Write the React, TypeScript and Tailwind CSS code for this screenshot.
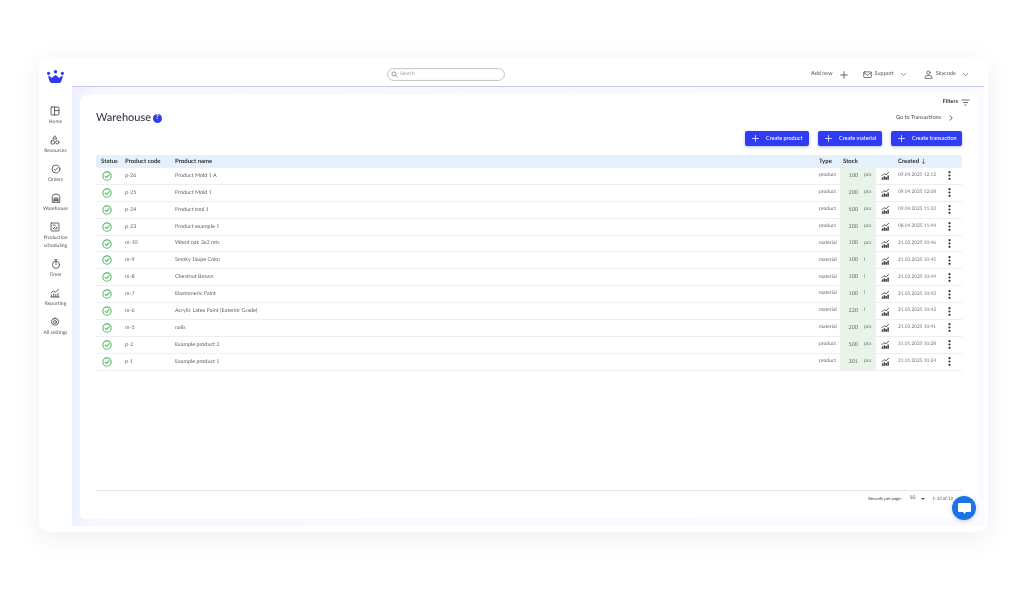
import React from "react";

const BLUE = "#2f3cf0";
const rows = [
  ["p-26", "Product Mold 1 A", "product", "100", "pcs", "09.04.2025 12:12"],
  ["p-25", "Product Mold 1", "product", "200", "pcs", "09.04.2025 12:08"],
  ["p-24", "Product tool 1", "product", "500", "pcs", "09.04.2025 11:33"],
  ["p-23", "Product example 1", "product", "200", "pcs", "08.04.2025 11:44"],
  ["m-10", "Wood oak 3x2 mts", "material", "100", "pcs", "21.03.2025 10:46"],
  ["m-9", "Smoky Taupe Color", "material", "100", "l", "21.03.2025 10:45"],
  ["m-8", "Chestnut Brown", "material", "100", "l", "21.03.2025 10:44"],
  ["m-7", "Elastomeric Paint", "material", "100", "l", "21.03.2025 10:43"],
  ["m-6", "Acrylic Latex Paint (Exterior Grade)", "material", "220", "l", "21.03.2025 10:42"],
  ["m-5", "nails", "material", "200", "pcs", "21.03.2025 10:41"],
  ["p-2", "Example product 2", "product", "500", "pcs", "31.01.2025 10:28"],
  ["p-1", "Example product 1", "product", "301", "pcs", "31.01.2025 10:24"],
];

const I = ({ s = 10, children, w = 0.85 }: { s?: number; children: React.ReactNode; w?: number }) => (
  <svg width={s} height={s} viewBox="0 0 24 24" fill="none" stroke="currentColor" strokeWidth={(w * 24) / s} strokeLinecap="round" strokeLinejoin="round">
    {children}
  </svg>
);

const Chevron = ({ s = 7 }: { s?: number }) => (
  <svg width={s} height={s} viewBox="0 0 24 24" fill="none" stroke="#666" strokeWidth="2.4" strokeLinecap="round" strokeLinejoin="round"><path d="M4 8l8 8 8-8" /></svg>
);
const Plus = ({ s = 9, c = "#fff" }: { s?: number; c?: string }) => (
  <svg width={s} height={s} viewBox="0 0 24 24" fill="none" stroke={c} strokeWidth="2.6" strokeLinecap="round"><path d="M12 2v20M2 12h20" /></svg>
);

const navItems: [string[], React.ReactNode][] = [
  [["Home"], <I><rect x="2.500" y="2.500" width="19" height="19" rx="2" /><path d="M11 2.500v19M11 11h10.500" /></I>],
  [["Resources"], <I><path d="M12 2.500l4.500 7h-9z" /><rect x="2.500" y="14" width="8" height="7.500" rx="1" /><circle cx="17.500" cy="17.500" r="4" /></I>],
  [["Orders"], <I><circle cx="12" cy="12" r="9.500" /><path d="M7.500 12.500l3 3 6-7" /></I>],
  [["Warehouse"], <I><path d="M3 21.500V9a9 6.500 0 0 1 18 0v12.500z" /><path d="M7.500 21.500V12h9v9.500M7.500 15h9M7.500 18h9" /></I>],
  [["Production", "scheduling"], <I><rect x="2.500" y="2.500" width="19" height="19" rx="1" /><path d="M7.500 16.500l4.500-4.500M12 16.500h4.500V12M7.500 7.500h5" /></I>],
  [["Timer"], <I><circle cx="12" cy="14" r="8.500" /><path d="M12 14V9M9 2h6M12 2v3.500" /></I>],
  [["Reporting"], <I><path d="M2.500 12l5-5 5 3 8-7" /><path d="M4 21.500v-5M9 21.500v-8M14 21.500v-6M19 21.500v-9M2 21.500h20" /></I>],
  [["All settings"], <I><circle cx="12" cy="12" r="3.500" /><path d="M12 2l2 2.600 3.200-.7.800 3.200 3 1.300-1.400 3 1.400 3-3 1.300-.8 3.200-3.200-.7-2 2.600-2-2.600-3.200.7-.8-3.200-3-1.300 1.400-3-1.400-3 3-1.300.8-3.200 3.200.7z" /></I>],
];

function CreateBtn({ label, w }: { label: string; w: string }) {
  return (
    <button className={`${w} h-[15px] bg-[#2f3cf0] rounded-[2px] flex items-center pl-[7px] text-white text-[5.5px] font-medium shadow-[0_1px_3px_rgba(47,60,240,0.35)]`}>
      <Plus s={7} />
      <span className="ml-[7px] whitespace-nowrap">{label}</span>
    </button>
  );
}

const grid = "grid grid-cols-[29px_50px_644px_21px_36px_22px_45px_19px] items-center";

export default function App() {
  return (
    <div className="w-[1024px] h-[589px] overflow-hidden pt-[57px] pl-[39px] font-['Lato','Liberation_Sans',sans-serif] text-[#444] [text-rendering:geometricPrecision] will-change-transform">
      <div className="w-[949px] h-[475px] bg-white rounded-[10px] shadow-[0_6px_28px_rgba(30,30,60,0.07)] flex">
        {/* Sidebar */}
        <aside className="w-[33px] shrink-0 flex flex-col items-center pt-[13px]">
          <svg width="17" height="13" viewBox="0 0 17 13" className="mb-[23px]">
            <g fill={BLUE}>
              <circle cx="1.600" cy="3.300" r="1.600" />
              <circle cx="8.500" cy="1.700" r="1.700" />
              <circle cx="15.400" cy="3.300" r="1.600" />
              <path d="M1.200 5.600c1.400.4 2.500 1.200 3.500 2.300.9-1 2.300-2.100 3.800-3 1.500.9 2.900 2 3.800 3 1-1.100 2.100-1.900 3.500-2.300-.2 2.700-1 5-2.200 7-.3.3-.6.400-1 .4H4.400c-.4 0-.7-.1-1-.4-1.200-2-2-4.300-2.200-7z" />
            </g>
          </svg>
          <nav className="flex flex-col items-center gap-[8.500px] text-[#4a4a55]">
            {navItems.map(([lines, icon]) => (
              <div key={lines[0]} className="flex flex-col items-center">
                {icon}
                <div className="mt-[3px] text-[5px] leading-[7.500px] text-center whitespace-nowrap text-[#555]">
                  {lines.map((l) => <div key={l}>{l}</div>)}
                </div>
              </div>
            ))}
          </nav>
        </aside>

        {/* Main */}
        <div className="flex-1 min-w-0 flex flex-col pb-[6px] pr-[4px]">
          <header className="h-[30px] shrink-0 border-b border-b-[#c3c6fb] flex items-center pt-[6px]">
            <div className="ml-[315px] w-[118px] h-[13px] rounded-full border border-[#c9c9c9] shadow-[inset_0_0_2px_rgba(0,0,0,0.08)] flex items-center pl-[3px] gap-[2px]">
              <svg width="7" height="7" viewBox="0 0 24 24" fill="none" stroke="#888" strokeWidth="3"><circle cx="10" cy="10" r="7" /><path d="M15 15l7 7" /></svg>
              <span className="text-[5px] text-[#999]">Search</span>
            </div>
            <div className="ml-auto flex items-center text-[5.5px] text-[#555] pr-[15px]">
              <span>Add new</span>
              <span className="ml-[7px]"><Plus s={8} c="#555" /></span>
              <span className="ml-[15px] text-[#555] flex"><I s={9} w={0.8}><rect x="2" y="5" width="20" height="15" rx="1.500" /><path d="M2 7l10 7 10-7" /></I></span>
              <span className="ml-[3px]">Support</span>
              <span className="ml-[6px] flex"><Chevron /></span>
              <span className="ml-[17px] flex text-[#555]"><I s={9} w={0.8}><circle cx="12" cy="7" r="4.500" /><path d="M3 22v-3a4 4 0 0 1 4-4h10a4 4 0 0 1 4 4v3z" /></I></span>
              <span className="ml-[3px]">Skycode</span>
              <span className="ml-[6px] flex"><Chevron /></span>
            </div>
          </header>

          <div className="flex-1 min-h-0 bg-gradient-to-r from-[#eef0ff] via-[#f6faff] via-[3%] to-[#f8fbff] pl-[8px] pt-[8px] pr-[6px] pb-[7px]">
            <main className="h-full bg-white rounded-[6px] relative pl-[16px] pr-[16px] flex flex-col">
              <div className="flex justify-end items-center pt-[2px] h-[12px] mr-[-8px]">
                <span className="text-[5.500px] font-bold text-[#333]">Filters</span>
                <svg width="9" height="7" viewBox="0 0 18 14" fill="none" stroke="#444" strokeWidth="1.500" className="ml-[3px]"><path d="M1 2h16M4 7h10M7 12h4" /></svg>
              </div>
              <div className="flex justify-between items-start h-[23px] mt-[3px]">
                <div className="flex items-center">
                  <span className="text-[11px] leading-[16px] font-medium text-[#3b3b4d]">Warehouse</span>
                  <span className="ml-[1.500px] w-[9px] h-[9px] rounded-full bg-[#2f3cf0] text-white text-[6.500px] font-bold flex items-center justify-center">?</span>
                </div>
                <div className="flex items-center text-[5.5px] text-[#444] pr-[8px] mt-[4px]">
                  <span>Go to Transactions</span>
                  <svg width="6" height="6" viewBox="0 0 24 24" fill="none" stroke="#444" strokeWidth="3.500" className="ml-[7px]"><path d="M7 2l10 10-10 10" /></svg>
                </div>
              </div>
              <div className="flex justify-end gap-[9px] mb-[9px] mt-[-2px]">
                <CreateBtn label="Create product" w="w-[64px]" />
                <CreateBtn label="Create material" w="w-[64px]" />
                <CreateBtn label="Create transaction" w="w-[71px]" />
              </div>

              <div className={`${grid} h-[13px] bg-[#e4f0fc] text-[6px] font-bold text-[#333] rounded-[2px]`}>
                <span className="pl-[5px]">Status</span>
                <span>Product code</span>
                <span>Product name</span>
                <span>Type</span>
                <span className="pl-[3px]">Stock</span>
                <span />
                <span className="flex items-center">Created <span className="ml-[2px] font-normal">↓</span></span>
                <span />
              </div>
              <div>
                {rows.map((r) => (
                  <div key={r[0]} className={`${grid} h-[16.900px] border-b border-b-[#eeeeee] text-[5.4px] text-[#666]`}>
                    <span className="pl-[6px] flex">
                      <svg width="10" height="10" viewBox="0 0 24 24" fill="none" stroke="#58b868" strokeWidth="2.600" strokeLinecap="round" strokeLinejoin="round"><circle cx="12" cy="12" r="10" /><path d="M7.500 12.500l3.200 3.200 6.500-7" /></svg>
                    </span>
                    <span>{r[0]}</span>
                    <span>{r[1]}</span>
                    <span className="text-[5px]">{r[2]}</span>
                    <span className="h-full bg-[#e8f4e8] flex items-center">
                      <span className="w-[18px] text-right">{r[3]}</span>
                      <span className="ml-[6px] text-[5px]">{r[4]}</span>
                    </span>
                    <span className="pl-[5px] flex text-[#444]">
                      <svg width="9" height="9" viewBox="0 0 24 24" fill="none" stroke="currentColor" strokeWidth="2.400"><path d="M2 13l6-6 5 3 8-7" /><path d="M4 23v-6M9 23v-9M14 23v-7M19 23v-11" strokeWidth="4" /></svg>
                    </span>
                    <span className="text-[4.800px] text-[#777] whitespace-nowrap">{r[5]}</span>
                    <span className="flex pl-[5px]">
                      <svg width="3" height="9" viewBox="0 0 3 9" fill="#333"><circle cx="1.500" cy="1.200" r="1.100" /><circle cx="1.500" cy="4.500" r="1.100" /><circle cx="1.500" cy="7.800" r="1.100" /></svg>
                    </span>
                  </div>
                ))}
              </div>

              <div className="mt-auto border-t border-t-[#e6e6e6] h-[29px] flex justify-end items-center pb-[12px] pr-[9px] text-[4.300px] text-[#444]">
                <span>Records per page:</span>
                <span className="ml-[8px] text-[5px]">50</span>
                <span className="ml-[6px] w-0 h-0 border-x-[2px] border-x-transparent border-t-[2px] border-t-[#555]" />
                <span className="ml-[7px] text-[4.400px]">1-12 of 12</span>
              </div>

              <div className="absolute right-[2px] bottom-[-1px] w-[24px] h-[24px] rounded-full bg-[#1a73e8] flex items-center justify-center shadow-[0_1px_4px_rgba(0,0,0,0.2)]">
                <svg width="13" height="11" viewBox="0 0 13 11" fill="#fff"><path d="M1 0h11a1 1 0 0 1 1 1v7a1 1 0 0 1-1 1H8l-1.500 2L5 9H1a1 1 0 0 1-1-1V1a1 1 0 0 1 1-1z" /></svg>
              </div>
            </main>
          </div>
        </div>
      </div>
    </div>
  );
}
